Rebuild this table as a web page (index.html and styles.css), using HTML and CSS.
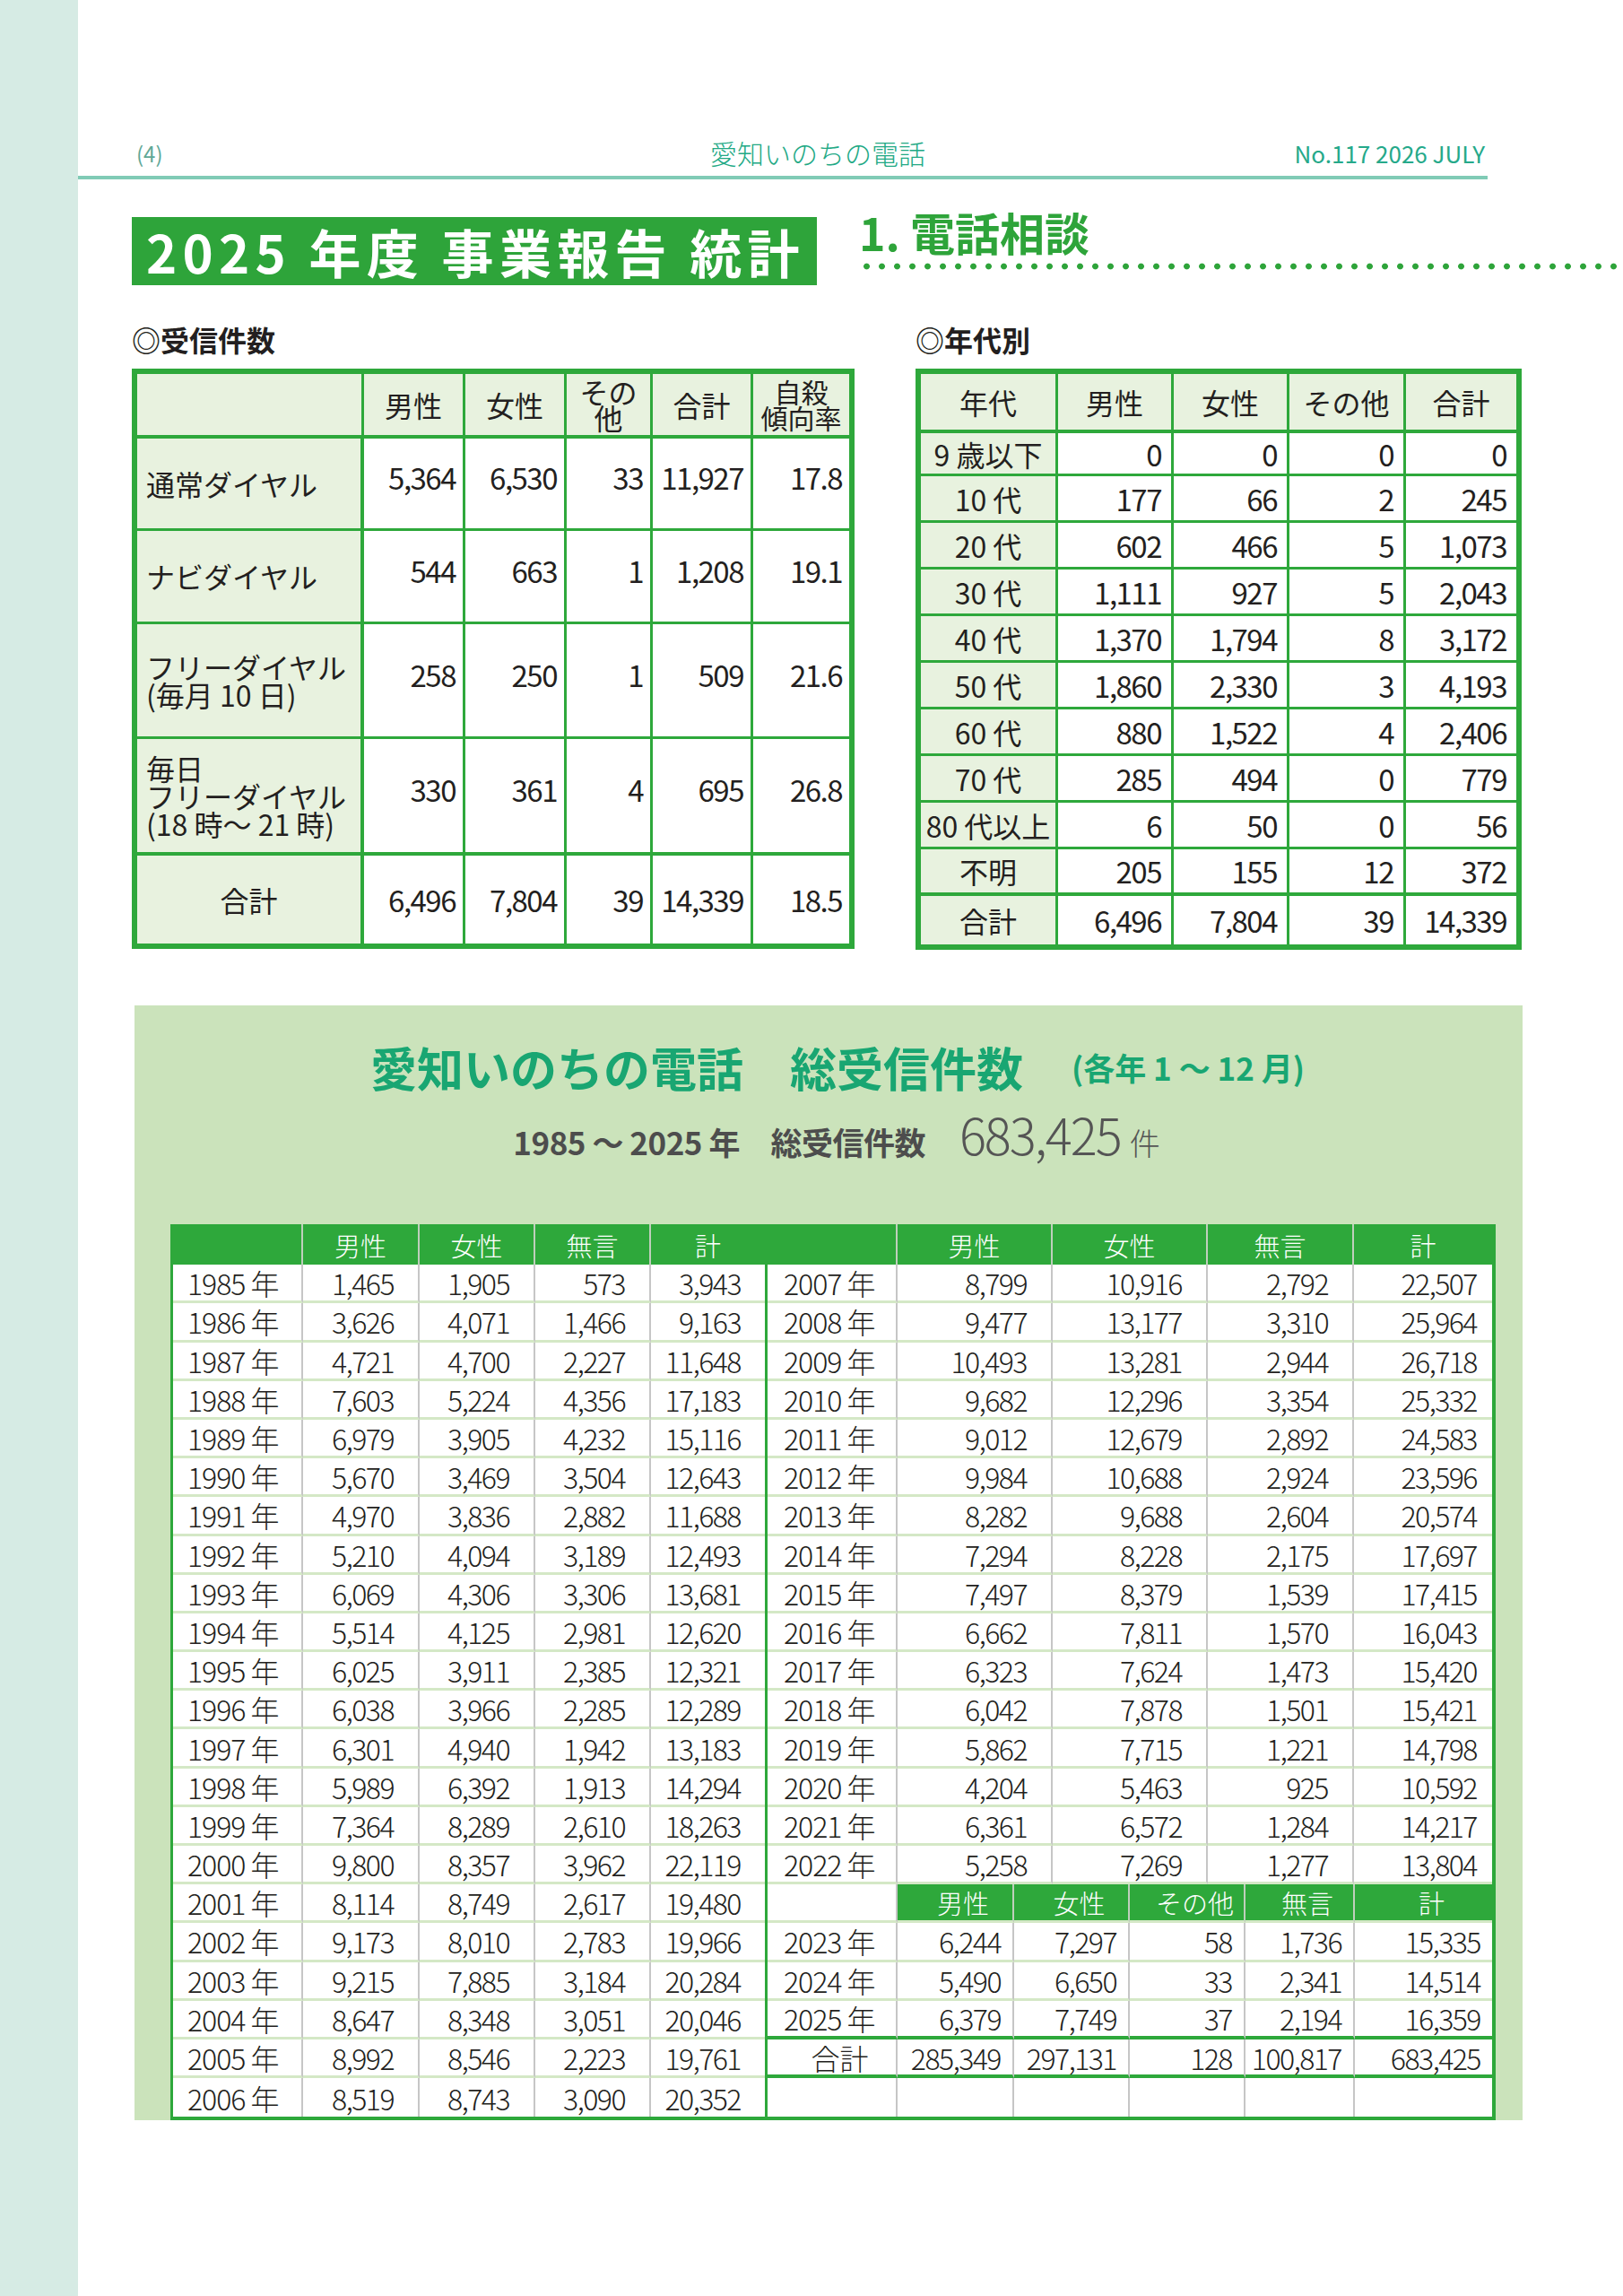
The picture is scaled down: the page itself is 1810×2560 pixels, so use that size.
FILE: index.html
```html
<!DOCTYPE html>
<html lang="ja">
<head>
<meta charset="utf-8">
<title>2025 年度 事業報告 統計</title>
<link rel="stylesheet" href="styles.css">
</head>
<body>
<div class="page">
  <aside class="band"></aside>
  <main class="main">
    <header class="running-head">
      <span class="page-no">(4)</span>
      <span class="masthead">愛知いのちの電話</span>
      <span class="issue">No.117 2026 JULY</span>
    </header>

    <section class="title-row">
      <h1 class="title-box">2025 年度 事業報告 統計</h1>
      <h2 class="section-title">1. 電話相談</h2>
    </section>

    <section class="tables-row">
      <div class="col">
        <h3 class="sub-head">◎受信件数</h3>
        <table class="grid-table t-calls">
          <colgroup><col class="c1"><col class="c2"><col class="c3"><col class="c4"><col class="c5"><col class="c6"></colgroup>
          <thead>
            <tr><th></th><th>男性</th><th>女性</th><th class="two">その<br>他</th><th>合計</th><th class="two rate">自殺<br>傾向率</th></tr>
          </thead>
          <tbody>
            <tr class="r1 up"><th>通常ダイヤル</th><td>5,364</td><td>6,530</td><td>33</td><td>11,927</td><td>17.8</td></tr>
            <tr class="r2 up"><th>ナビダイヤル</th><td>544</td><td>663</td><td>1</td><td>1,208</td><td>19.1</td></tr>
            <tr class="r3 up"><th>フリーダイヤル<br>(毎月 10 日)</th><td>258</td><td>250</td><td>1</td><td>509</td><td>21.6</td></tr>
            <tr class="r4 up before-total"><th>毎日<br>フリーダイヤル<br>(18 時～ 21 時)</th><td>330</td><td>361</td><td>4</td><td>695</td><td>26.8</td></tr>
            <tr class="r5"><th class="center">合計</th><td>6,496</td><td>7,804</td><td>39</td><td>14,339</td><td>18.5</td></tr>
          </tbody>
        </table>
      </div>
      <div class="col">
        <h3 class="sub-head">◎年代別</h3>
        <table class="grid-table t-age">
          <colgroup><col class="a1"><col class="a2"><col class="a3"><col class="a4"><col class="a5"></colgroup>
          <thead>
            <tr><th>年代</th><th>男性</th><th>女性</th><th>その他</th><th>合計</th></tr>
          </thead>
          <tbody>
            <tr class="first"><th>9 歳以下</th><td>0</td><td>0</td><td>0</td><td>0</td></tr>
            <tr><th>10 代</th><td>177</td><td>66</td><td>2</td><td>245</td></tr>
            <tr><th>20 代</th><td>602</td><td>466</td><td>5</td><td>1,073</td></tr>
            <tr><th>30 代</th><td>1,111</td><td>927</td><td>5</td><td>2,043</td></tr>
            <tr><th>40 代</th><td>1,370</td><td>1,794</td><td>8</td><td>3,172</td></tr>
            <tr><th>50 代</th><td>1,860</td><td>2,330</td><td>3</td><td>4,193</td></tr>
            <tr><th>60 代</th><td>880</td><td>1,522</td><td>4</td><td>2,406</td></tr>
            <tr><th>70 代</th><td>285</td><td>494</td><td>0</td><td>779</td></tr>
            <tr><th>80 代以上</th><td>6</td><td>50</td><td>0</td><td>56</td></tr>
            <tr class="before-total"><th>不明</th><td>205</td><td>155</td><td>12</td><td>372</td></tr>
            <tr class="total"><th>合計</th><td>6,496</td><td>7,804</td><td>39</td><td>14,339</td></tr>
          </tbody>
        </table>
      </div>
    </section>

    <section class="panel">
      <h2 class="panel-title">愛知いのちの電話　総受信件数<small>(各年 1 ～ 12 月)</small></h2>
      <p class="panel-sub"><span class="sub-text">1985 ～ 2025 年　総受信件数</span><span class="big">683,425</span><span class="ken">件</span></p>

      <div class="history">
        <div class="h-left">
          <table class="hist">
            <colgroup><col class="y"><col class="l2"><col class="l3"><col class="l4"><col class="l5"></colgroup>
            <thead><tr><th></th><th>男性</th><th>女性</th><th>無言</th><th>計</th></tr></thead>
            <tbody>
              <tr><th>1985 年</th><td>1,465</td><td>1,905</td><td>573</td><td>3,943</td></tr>
              <tr><th>1986 年</th><td>3,626</td><td>4,071</td><td>1,466</td><td>9,163</td></tr>
              <tr><th>1987 年</th><td>4,721</td><td>4,700</td><td>2,227</td><td>11,648</td></tr>
              <tr><th>1988 年</th><td>7,603</td><td>5,224</td><td>4,356</td><td>17,183</td></tr>
              <tr><th>1989 年</th><td>6,979</td><td>3,905</td><td>4,232</td><td>15,116</td></tr>
              <tr><th>1990 年</th><td>5,670</td><td>3,469</td><td>3,504</td><td>12,643</td></tr>
              <tr><th>1991 年</th><td>4,970</td><td>3,836</td><td>2,882</td><td>11,688</td></tr>
              <tr><th>1992 年</th><td>5,210</td><td>4,094</td><td>3,189</td><td>12,493</td></tr>
              <tr><th>1993 年</th><td>6,069</td><td>4,306</td><td>3,306</td><td>13,681</td></tr>
              <tr><th>1994 年</th><td>5,514</td><td>4,125</td><td>2,981</td><td>12,620</td></tr>
              <tr><th>1995 年</th><td>6,025</td><td>3,911</td><td>2,385</td><td>12,321</td></tr>
              <tr><th>1996 年</th><td>6,038</td><td>3,966</td><td>2,285</td><td>12,289</td></tr>
              <tr><th>1997 年</th><td>6,301</td><td>4,940</td><td>1,942</td><td>13,183</td></tr>
              <tr><th>1998 年</th><td>5,989</td><td>6,392</td><td>1,913</td><td>14,294</td></tr>
              <tr><th>1999 年</th><td>7,364</td><td>8,289</td><td>2,610</td><td>18,263</td></tr>
              <tr><th>2000 年</th><td>9,800</td><td>8,357</td><td>3,962</td><td>22,119</td></tr>
              <tr><th>2001 年</th><td>8,114</td><td>8,749</td><td>2,617</td><td>19,480</td></tr>
              <tr><th>2002 年</th><td>9,173</td><td>8,010</td><td>2,783</td><td>19,966</td></tr>
              <tr><th>2003 年</th><td>9,215</td><td>7,885</td><td>3,184</td><td>20,284</td></tr>
              <tr><th>2004 年</th><td>8,647</td><td>8,348</td><td>3,051</td><td>20,046</td></tr>
              <tr><th>2005 年</th><td>8,992</td><td>8,546</td><td>2,223</td><td>19,761</td></tr>
              <tr><th>2006 年</th><td>8,519</td><td>8,743</td><td>3,090</td><td>20,352</td></tr>
            </tbody>
          </table>
        </div>
        <div class="h-right">
          <table class="hist upper">
            <colgroup><col class="y"><col class="u2"><col class="u3"><col class="u4"><col class="u5"></colgroup>
            <thead><tr><th></th><th>男性</th><th>女性</th><th>無言</th><th>計</th></tr></thead>
            <tbody>
              <tr><th>2007 年</th><td>8,799</td><td>10,916</td><td>2,792</td><td>22,507</td></tr>
              <tr><th>2008 年</th><td>9,477</td><td>13,177</td><td>3,310</td><td>25,964</td></tr>
              <tr><th>2009 年</th><td>10,493</td><td>13,281</td><td>2,944</td><td>26,718</td></tr>
              <tr><th>2010 年</th><td>9,682</td><td>12,296</td><td>3,354</td><td>25,332</td></tr>
              <tr><th>2011 年</th><td>9,012</td><td>12,679</td><td>2,892</td><td>24,583</td></tr>
              <tr><th>2012 年</th><td>9,984</td><td>10,688</td><td>2,924</td><td>23,596</td></tr>
              <tr><th>2013 年</th><td>8,282</td><td>9,688</td><td>2,604</td><td>20,574</td></tr>
              <tr><th>2014 年</th><td>7,294</td><td>8,228</td><td>2,175</td><td>17,697</td></tr>
              <tr><th>2015 年</th><td>7,497</td><td>8,379</td><td>1,539</td><td>17,415</td></tr>
              <tr><th>2016 年</th><td>6,662</td><td>7,811</td><td>1,570</td><td>16,043</td></tr>
              <tr><th>2017 年</th><td>6,323</td><td>7,624</td><td>1,473</td><td>15,420</td></tr>
              <tr><th>2018 年</th><td>6,042</td><td>7,878</td><td>1,501</td><td>15,421</td></tr>
              <tr><th>2019 年</th><td>5,862</td><td>7,715</td><td>1,221</td><td>14,798</td></tr>
              <tr><th>2020 年</th><td>4,204</td><td>5,463</td><td>925</td><td>10,592</td></tr>
              <tr><th>2021 年</th><td>6,361</td><td>6,572</td><td>1,284</td><td>14,217</td></tr>
              <tr><th>2022 年</th><td>5,258</td><td>7,269</td><td>1,277</td><td>13,804</td></tr>
            </tbody>
          </table>
          <table class="hist lower">
            <colgroup><col class="y"><col class="w2"><col class="w3"><col class="w4"><col class="w5"><col class="w6"></colgroup>
            <tbody>
              <tr class="subhead"><th></th><th>男性</th><th>女性</th><th>その他</th><th>無言</th><th>計</th></tr>
              <tr><th>2023 年</th><td>6,244</td><td>7,297</td><td>58</td><td>1,736</td><td>15,335</td></tr>
              <tr><th>2024 年</th><td>5,490</td><td>6,650</td><td>33</td><td>2,341</td><td>14,514</td></tr>
              <tr class="last-year"><th>2025 年</th><td>6,379</td><td>7,749</td><td>37</td><td>2,194</td><td>16,359</td></tr>
              <tr class="sum"><th class="center">合計</th><td>285,349</td><td>297,131</td><td>128</td><td>100,817</td><td>683,425</td></tr>
              <tr class="empty"><th></th><td></td><td></td><td></td><td></td><td></td></tr>
            </tbody>
          </table>
        </div>
      </div>
    </section>
  </main>
</div>
</body>
</html>
```

FILE: styles.css
```css
* { box-sizing: border-box; }

html, body {
  margin: 0;
  padding: 0;
}

body {
  width: 1810px;
  min-height: 2560px;
  background: #ffffff;
  color: #231f20;
  font-family: "Noto Sans CJK JP", "Noto Sans", sans-serif;
}

.page {
  display: grid;
  grid-template-columns: 87px 1fr;
  min-height: 2560px;
}

.band { background: #d6ebe4; }

.main { padding-top: 148px; }

/* running head */
.running-head {
  display: grid;
  grid-template-columns: 640px auto 1fr;
  align-items: center;
  height: 52px;
  margin-right: 151px;
  padding: 0 3px 4px 65px;
  border-bottom: 4px solid #80cbb6;
}
.page-no { font-size: 24px; color: #5fa897; }
.masthead { font-size: 30px; font-weight: 300; color: #22a985; }
.issue {
  justify-self: end;
  font-size: 26px;
  color: #25a98a;
}

/* title */
.title-row {
  display: flex;
  align-items: flex-start;
  margin-top: 42px;
}
.title-box {
  margin: 0 0 0 60px;
  width: 764px;
  height: 76px;
  padding-left: 16px;
  background: #2ea43a;
  color: #ffffff;
  font-size: 58px;
  font-weight: 700;
  line-height: 76px;
  letter-spacing: 6.3px;
  white-space: nowrap;
}
.section-title {
  flex: 1;
  margin: -14px 0 0 47px;
  font-size: 50px;
  font-weight: 700;
  line-height: 60px;
  color: #2ea43a;
}
.section-title::after {
  content: "";
  display: block;
  height: 10px;
  margin-top: 4px;
  background: radial-gradient(circle at center, #2ea43a 3px, rgba(46,164,58,0) 3.8px) 0 0 / 17px 10px repeat-x;
}

/* top tables */
.tables-row {
  display: grid;
  grid-template-columns: 807px 676px;
  column-gap: 67px;
  align-items: start;
  margin: 42px 0 0 60px;
}
.sub-head {
  margin: 0 0 15px;
  font-size: 32px;
  font-weight: 700;
  line-height: 36px;
}

.grid-table {
  border-collapse: separate;
  border-spacing: 0;
  table-layout: fixed;
  border: 6px solid #2ea83b;
}
.grid-table th,
.grid-table td {
  padding: 0;
  border-right: 3px solid #2ea83b;
  border-bottom: 3px solid #2ea83b;
  font-size: 32px;
  font-weight: 400;
  line-height: 40px;
  vertical-align: middle;
}
.grid-table tr > :last-child { border-right: 0; }
.grid-table tbody tr:last-child > * { border-bottom: 0; }
.grid-table thead th {
  background: #e8f2df;
  border-bottom-width: 4px;
  text-align: center;
}
.grid-table tbody th { background: #e8f2df; }
.grid-table td {
  text-align: right;
  font-size: 33px;
  letter-spacing: -1.5px;
  white-space: nowrap;
  background: #ffffff;
}
.grid-table tr.before-total > * { border-bottom-width: 4px; }

/* 受信件数 */
.t-calls { width: 806px; }
.t-calls col.c1 { width: 253px; }
.t-calls col.c2 { width: 113px; }
.t-calls col.c3 { width: 113px; }
.t-calls col.c4 { width: 96px; }
.t-calls col.c5 { width: 112px; }
.t-calls col.c6 { width: 107px; }
.t-calls thead tr { height: 72px; }
.t-calls thead th.two { line-height: 29px; }
.t-calls thead th.rate { font-size: 30px; }
.t-calls tbody th {
  text-align: left;
  padding-left: 10px;
  border-right-width: 4px;
  line-height: 31px;
}
.t-calls tbody th.center { text-align: center; padding-left: 0; }
.t-calls td { padding-right: 8px; }
.t-calls tr.up td { padding-bottom: 14px; }
.t-calls tr.r1 { height: 103px; }
.t-calls tr.r2 { height: 104px; }
.t-calls tr.r3 { height: 128px; }
.t-calls tr.r4 { height: 130px; }
.t-calls tr.r5 { height: 98px; }

/* 年代別 */
.t-age { width: 676px; }
.t-age col.a1 { width: 153px; }
.t-age col.a2 { width: 129px; }
.t-age col.a3 { width: 129px; }
.t-age col.a4 { width: 130px; }
.t-age col.a5 { width: 123px; }
.t-age thead tr { height: 66px; }
.t-age tbody tr { height: 52px; }
.t-age tbody tr.first { height: 48px; }
.t-age tbody tr.total { height: 54px; }
.t-age tbody th { text-align: center; white-space: nowrap; }
.t-age td { padding-right: 11px; }

/* panel */
.panel {
  width: 1548px;
  margin: 62px 0 0 63px;
  padding-top: 38px;
  background: #cbe3bb;
}
.panel-title {
  display: flex;
  justify-content: center;
  align-items: center;
  gap: 54px;
  margin: 0;
  padding-left: 20px;
  font-size: 52px;
  font-weight: 700;
  line-height: 62px;
  color: #19a672;
}
.panel-title small {
  font-size: 35px;
  font-weight: 700;
}
.panel-sub {
  display: flex;
  justify-content: center;
  align-items: baseline;
  margin: 9px 0 0;
  padding-left: 18px;
  color: #4d4d4d;
  line-height: 1.2;
}
.sub-text {
  font-size: 35px;
  font-weight: 700;
  letter-spacing: -0.5px;
}
.big {
  margin-left: 38px;
  font-size: 56px;
  font-weight: 300;
  letter-spacing: -2px;
  color: #555555;
}
.ken {
  margin-left: 10px;
  font-size: 34px;
  font-weight: 300;
  color: #555555;
}

/* history table */
.history {
  display: flex;
  width: 1478px;
  margin: 68px 0 0 40px;
}
.h-left {
  width: 663px;
  border-left: 3px solid #2ea83b;
  border-bottom: 4px solid #2ea83b;
}
.h-right {
  width: 815px;
  border-left: 3px solid #2ea83b;
  border-right: 4px solid #2ea83b;
  border-bottom: 4px solid #2ea83b;
}
.hist {
  width: 100%;
  border-collapse: separate;
  border-spacing: 0;
  table-layout: fixed;
  background: #ffffff;
}
.hist th,
.hist td {
  padding: 0;
  border-right: 2px solid #c6c6c6;
  border-bottom: 3px solid #d4e8c6;
  font-size: 32px;
  font-weight: 300;
  line-height: 36px;
  letter-spacing: -1.5px;
  color: #231f20;
  vertical-align: middle;
  white-space: nowrap;
}
.hist tr > :last-child { border-right: 0; }
.hist tbody tr { height: 43.2px; }
.hist thead tr { height: 45px; }
.hist thead th,
.hist tr.subhead th {
  background: #2ea83b;
  color: #ffffff;
  font-size: 29px;
  font-weight: 300;
  letter-spacing: 0;
  text-align: center;
  border-bottom: 0;
  border-right-color: #bfcfbc;
}
.hist tr.subhead th:first-child { background: #ffffff; border-right-color: #c6c6c6; }
.hist tr.subhead th { border-bottom: 3px solid #d4e8c6; }
.hist tbody th { text-align: left; padding-left: 16px; letter-spacing: -1px; }
.hist tbody th.center { text-align: center; padding-left: 0; letter-spacing: 0; }
.hist td { text-align: right; padding-right: 27px; }

.h-left .hist tbody tr:last-child > * { border-bottom: 0; }
.h-left col.y { width: 145px; }
.h-left col.l2 { width: 130px; }
.h-left col.l3 { width: 129px; }
.h-left col.l4 { width: 129px; }
.h-left col.l5 { width: 127px; }

.hist.upper col.y { width: 145px; }
.hist.upper col.u2 { width: 173px; }
.hist.upper col.u3 { width: 173px; }
.hist.upper col.u4 { width: 163px; }
.hist.upper col.u5 { width: 154px; }
.hist.upper tbody th { padding-left: 18px; }
.hist.upper td:last-child { padding-right: 17px; }

.hist.lower col.y { width: 145px; }
.hist.lower col.w2 { width: 130px; }
.hist.lower col.w3 { width: 129px; }
.hist.lower col.w4 { width: 129px; }
.hist.lower col.w5 { width: 122px; }
.hist.lower col.w6 { width: 153px; }
.hist.lower tbody th { padding-left: 18px; }
.hist.lower td { padding-right: 13px; }
.hist.lower tr.last-year > * { border-bottom: 4px solid #2ea83b; }
.hist.lower tr.sum > * { border-bottom: 4px solid #2ea83b; }
.hist.lower tr.empty > * { border-bottom: 0; }
```
